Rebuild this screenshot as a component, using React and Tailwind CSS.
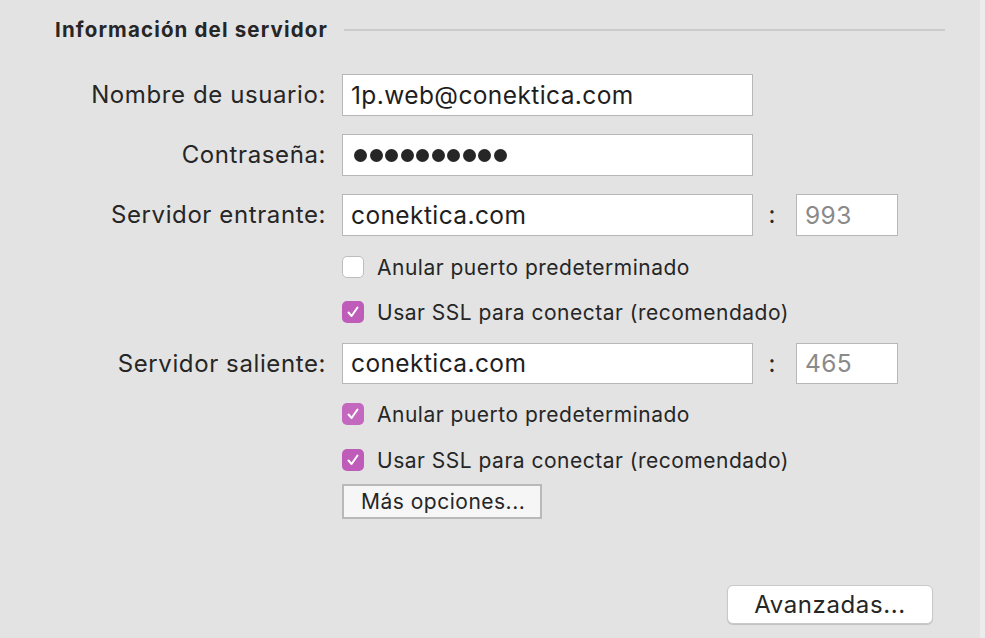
import React from "react";

const font = { fontFamily: "Inter, 'Liberation Sans', sans-serif" };

function Check({ checked, dim }) {
  if (!checked)
    return (
      <div className="w-[22px] h-[22px] rounded-[5px] bg-white border border-[#bdbdbd] shrink-0" />
    );
  return (
    <div
      className={
        "w-[22px] h-[22px] rounded-[5px] shrink-0 flex items-center justify-center " +
        (dim ? "bg-[#c468bf]" : "bg-[#bf5cb9]")
      }
    >
      <svg width="14" height="14" viewBox="0 0 14 14" fill="none">
        <path d="M2.5 7.5 L5.6 11 L11.5 2.5" stroke="white" strokeWidth="2" strokeLinecap="round" strokeLinejoin="round" />
      </svg>
    </div>
  );
}

function Label({ children }) {
  return (
    <div className="w-[327px] shrink-0 text-right pr-[1px] text-[24px] tracking-[0.6px] text-[#262626] leading-none whitespace-nowrap">
      {children}
    </div>
  );
}

function Field({ children, w = "w-[411px]", h = "h-[42px]", gray }) {
  return (
    <div
      className={
        w + " " + h +
        " bg-white border border-[#b7b7b7] flex items-center px-[8px] text-[24.5px] tracking-[0.4px] leading-none whitespace-nowrap " +
        (gray ? "text-[#8a8a8a]" : "text-[#1e1e1e]")
      }
    >
      {children}
    </div>
  );
}

function CheckRow({ checked, dim, children, className = "" }) {
  return (
    <div className={"flex items-center h-[24px] ml-[342px] " + className}>
      <Check checked={checked} dim={dim} />
      <span className="ml-[13px] text-[21px] tracking-[0.5px] leading-none text-[#262626] whitespace-nowrap">{children}</span>
    </div>
  );
}

function Colon() {
  return (
    <div className="w-[38px] flex justify-center text-[24px] leading-none text-[#262626]">:</div>
  );
}

export default function App() {
  const dots = [0, 1, 2, 3, 4, 5, 6, 7, 8, 9];
  return (
    <div className="w-[985px] h-[638px] bg-[#e3e3e3] flex overflow-hidden" style={font}>
      <div className="w-[980px] h-full flex flex-col">
        <div className="flex items-center h-[24px] mt-[18px]">
          <div className="ml-[55px] text-[20.5px] tracking-[1.15px] font-bold text-[#262626] whitespace-nowrap leading-none">
            Información del servidor
          </div>
          <div className="ml-[16px] flex-1 mr-[35px] h-[2px] bg-[#cbcbcb]" />
        </div>

        <div className="flex items-center mt-[32px]">
          <Label>Nombre de usuario:</Label>
          <div className="ml-[15px]"><Field>1p.web@conektica.com</Field></div>
        </div>
        <div className="flex items-center mt-[18px]">
          <Label>Contraseña:</Label>
          <div className="ml-[15px]">
            <Field>
              <div className="flex gap-[2.5px] ml-[3px]">
                {dots.map((d) => (
                  <div key={d} className="w-[13px] h-[13px] rounded-full bg-[#262626]" />
                ))}
              </div>
            </Field>
          </div>
        </div>
        <div className="flex items-center mt-[18px]">
          <Label>Servidor entrante:</Label>
          <div className="ml-[15px]"><Field>conektica.com</Field></div>
          <Colon />
          <div className="ml-[5px]"><Field w="w-[102px]" gray>993</Field></div>
        </div>

        <CheckRow className="mt-[19px]">Anular puerto predeterminado</CheckRow>
        <CheckRow checked className="mt-[21px]">Usar SSL para conectar (recomendado)</CheckRow>

        <div className="flex items-center mt-[19px]">
          <Label>Servidor saliente:</Label>
          <div className="ml-[15px]"><Field h="h-[41px]">conektica.com</Field></div>
          <Colon />
          <div className="ml-[5px]"><Field w="w-[102px]" h="h-[41px]" gray>465</Field></div>
        </div>

        <CheckRow checked dim className="mt-[18px]">Anular puerto predeterminado</CheckRow>
        <CheckRow checked className="mt-[22px]">Usar SSL para conectar (recomendado)</CheckRow>

        <div className="ml-[342px] mt-[12px] w-[200px] h-[35px] bg-[#f6f6f6] border-2 border-[#b9b9b9] flex items-center pl-[17px] text-[21px] tracking-[0.5px] leading-none text-[#262626]">
          Más opciones...
        </div>

        <div className="flex justify-end mr-[47px] mt-[66px]">
          <div className="w-[206px] h-[39px] bg-white rounded-[6px] border border-[#c9c9c9] shadow-[0_1px_1px_rgba(0,0,0,0.15)] flex items-center justify-center text-[24px] tracking-[0.6px] leading-none text-[#262626]">
            Avanzadas...
          </div>
        </div>
      </div>
      <div className="w-[5px] h-full bg-[#ececec]" />
    </div>
  );
}
